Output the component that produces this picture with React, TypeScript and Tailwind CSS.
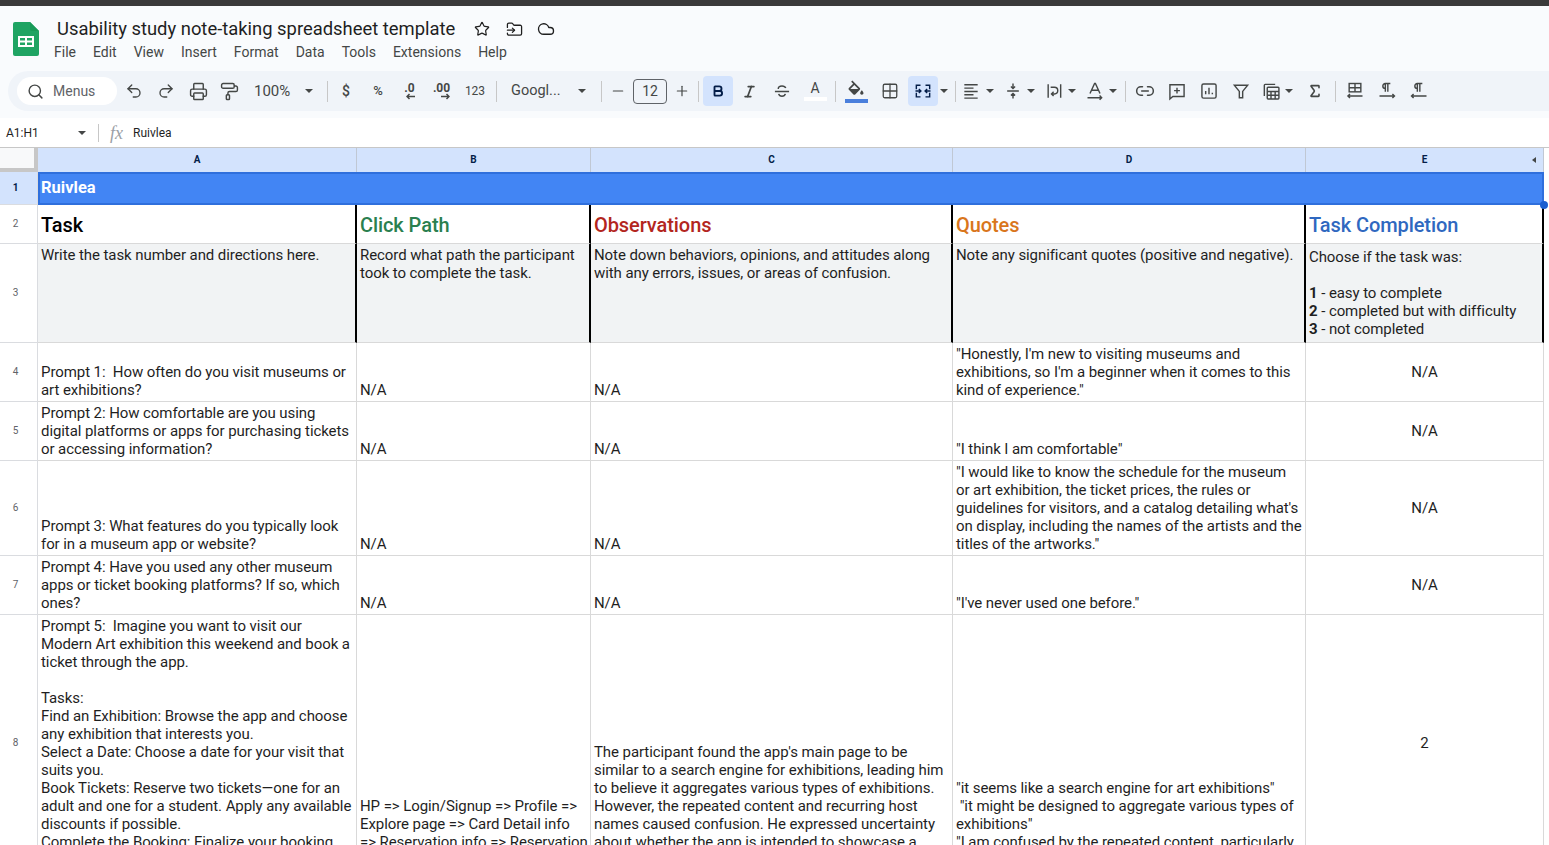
import {
	Bold,
	Cloud,
	FolderInput,
	Grid2x2,
	Italic,
	Link2,
	Minus,
	PaintRoller,
	Plus,
	Printer,
	Redo2,
	Search,
	Sigma,
	Star,
	Undo2,
} from "lucide-react";
import type { ReactNode } from "react";

const FONT = "font-['Roboto',sans-serif]";

function Caret({ className = "" }: { className?: string }) {
	return (
		<span
			className={`inline-block h-0 w-[8px] shrink-0 border-x-[4px] border-t-[4px] border-x-transparent border-t-[#444746] ${className}`}
		/>
	);
}

function Sep({ className = "" }: { className?: string }) {
	return <span className={`h-[21px] w-px shrink-0 bg-[#c7c7c7] ${className}`} />;
}

function Ico({ children, w = 32, className = "" }: { children: ReactNode; w?: number; className?: string }) {
	return (
		<span
			className={`flex h-[28px] shrink-0 items-center justify-center text-[#444746] ${className}`}
			style={{ width: w }}
		>
			{children}
		</span>
	);
}

function Svg({ children, size = 20 }: { children: ReactNode; size?: number }) {
	return (
		<svg
			fill="none"
			height={size}
			stroke="currentColor"
			strokeWidth="1.7"
			viewBox="0 0 24 24"
			width={size}
		>
			{children}
		</svg>
	);
}

function Arrow({ left }: { left?: boolean }) {
	return (
		<svg fill="none" height="7" stroke="currentColor" strokeWidth="1.5" viewBox="0 0 9 7" width="9">
			<path d={left ? "M9 3.500H1M3.500 1 1 3.500 3.500 6" : "M0 3.500h8M5.500 1 8 3.500 5.500 6"} />
		</svg>
	);
}

function Toolbar() {
	return (
		<div className="ml-[8px] flex h-[40px] items-center rounded-l-[20px] bg-[#f0f4f9] pl-[9px] text-[#444746]">
			<div className="flex h-[28px] w-[100px] shrink-0 items-center rounded-full bg-white pl-[10px]">
				<Search size={17} strokeWidth={2} />
				<span className="ml-[9px] text-[14px] text-[#5f6368]">Menus</span>
			</div>
			<Ico className="ml-px"><Undo2 size={18} strokeWidth={1.8} /></Ico>
			<Ico><Redo2 size={18} strokeWidth={1.8} /></Ico>
			<Ico><Printer size={19} strokeWidth={1.8} /></Ico>
			<Ico w={31}><PaintRoller size={19} strokeWidth={1.8} /></Ico>
			<span className="ml-[9px] w-[38px] text-[15px]">100%</span>
			<Caret className="ml-[13px]" />
			<Sep className="ml-[14px]" />
			<Ico className="ml-[2px]"><span className="text-[14px] font-medium">$</span></Ico>
			<Ico><span className="text-[13px] font-medium">%</span></Ico>
			<Ico w={31}>
				<span className="flex flex-col items-end text-[12px] font-bold leading-[10px]">
					.0
					<Arrow left />
				</span>
			</Ico>
			<Ico w={33}>
				<span className="flex flex-col items-end text-[12px] font-bold leading-[10px]">
					.00
					<Arrow />
				</span>
			</Ico>
			<Ico w={34}><span className="text-[12px]">123</span></Ico>
			<Sep className="ml-[4px]" />
			<span className="ml-[14px] w-[50px] text-[14.5px]">Googl...</span>
			<Caret className="ml-[17px]" />
			<Sep className="ml-[15px]" />
			<Ico className="ml-px" w={30}><Minus size={16} strokeWidth={1.8} /></Ico>
			<span className="flex h-[25px] w-[34px] shrink-0 items-center justify-center rounded-[4px] border border-[#5f6368] text-[14px]">
				12
			</span>
			<Ico w={30}><Plus size={16} strokeWidth={1.8} /></Ico>
			<Sep className="ml-px" />
			<span className="ml-[4px] flex h-[30px] w-[30px] shrink-0 items-center justify-center rounded-[4px] bg-[#d3e3fd] text-[#041e49]">
				<Bold size={14} strokeWidth={3.2} />
			</span>
			<Ico><Italic size={15} strokeWidth={2.8} /></Ico>
			<Ico w={33}>
				<Svg>
					<path d="M7.500 9.500C7.500 7 9.500 6 12 6s4 1 4.500 2.500M3.500 12.500h17M8 15.500c.5 2 2 2.800 4 2.800s3.500-.8 4-2.800" />
				</Svg>
			</Ico>
			<Ico w={34}>
				<span className="flex flex-col items-center text-[14px] leading-[15px]">
					A<span className="mt-px h-[4px] w-[23px] bg-white" />
				</span>
			</Ico>
			<Sep className="ml-[3px]" />
			<span className="flex w-[40px] shrink-0 flex-col items-center">
				<svg fill="#444746" height="17" viewBox="0 0 24 19" width="20">
					<path d="M16.560 8.940L7.620 0 6.210 1.410l2.380 2.380-5.150 5.150c-.59.59-.59 1.540 0 2.120l5.500 5.500c.29.29.68.44 1.060.44s.77-.15 1.060-.44l5.500-5.500c.59-.58.59-1.530 0-2.120zM5.210 10L10 5.210 14.790 10H5.210zM19 11.500s-2 2.170-2 3.500c0 1.100.9 2 2 2s2-.9 2-2c0-1.330-2-3.500-2-3.500z" />
				</svg>
				<span className="mt-[2px] h-[4px] w-[23px] bg-[#4a7fdc]" />
			</span>
			<Ico w={28}><Grid2x2 size={18} strokeWidth={1.7} /></Ico>
			<span className="ml-[4px] flex h-[30px] w-[30px] shrink-0 items-center justify-center rounded-[4px] bg-[#d3e3fd] text-[#041e49]">
				<Svg>
					<path d="M4 10V5h5M4 14v5h5M20 10V5h-5M20 14v5h-5M3 12h6M21 12h-6M7 9.500 9.500 12 7 14.500M17 9.500 14.500 12l2.500 2.500" />
				</Svg>
			</span>
			<Caret className="ml-[2px]" />
			<Sep className="ml-[7px]" />
			<Ico w={30}>
				<Svg><path d="M4 4.500h16M4 8.500h11M4 12.500h16M4 16.500h11M4 20.500h16" /></Svg>
			</Ico>
			<Caret />
			<Ico className="ml-[5px]" w={28}>
				<Svg><path d="M5 12h14M12 3v6M9.500 6.500 12 9l2.500-2.500M12 21v-6M9.500 17.500 12 15l2.500 2.500" /></Svg>
			</Ico>
			<Caret />
			<Ico className="ml-[4px]" w={29}>
				<Svg><path d="M5 4v16M20 4v16M8 7.500h4.500a4 4 0 0 1 0 8H9M11.500 13 9 15.500l2.500 2.500" /></Svg>
			</Ico>
			<Caret />
			<Ico className="ml-[4px]" w={29}>
				<Svg><path d="M6 15 11.500 3h1L18 15M8 11h8M3 20h17M17.500 17.500 20 20l-2.500 2.500" /></Svg>
			</Ico>
			<Caret />
			<Sep className="ml-[8px]" />
			<Ico w={38}><Link2 size={20} strokeWidth={1.8} /></Ico>
			<Ico w={26}>
				<Svg><path d="M3.500 4.500h17v14H7l-3.500 3zM12 8v7M8.500 11.500h7" /></Svg>
			</Ico>
			<Ico w={38}>
				<Svg><rect height="17" rx="2" width="17" x="3.500" y="3.500" /><path d="M8 16v-4M12 16V8M16 16v-2" /></Svg>
			</Ico>
			<Ico w={26}>
				<Svg><path d="M4 5h16l-6 7.500V20h-4v-7.500z" /></Svg>
			</Ico>
			<Ico className="ml-[2px]" w={29}>
				<Svg><path d="M4 18V5a1 1 0 0 1 1-1h12" /><rect height="14" rx="1" width="14" x="7.500" y="7.500" /><path d="M7.500 12.500h14M7.500 17h14M12 12.500v9M17 12.500v9" /></Svg>
			</Ico>
			<Caret />
			<Ico className="ml-[2px]" w={40}><Sigma size={16} strokeWidth={2.4} /></Ico>
			<Sep />
			<Ico w={38}>
				<Svg><rect height="10" width="14" x="5" y="3" /><path d="M5 8h14M12 3v10M3 18h18M6 15.500 3.500 18 6 20.500" /></Svg>
			</Ico>
			<Ico w={26}>
				<Svg><path d="M10 13V3h6M13 3v10M10 3a3 3 0 0 0 0 6M3 18h18M18.500 15.500 21 18l-2.500 2.500" /></Svg>
			</Ico>
			<Ico w={38}>
				<Svg><path d="M10 13V3h6M13 3v10M10 3a3 3 0 0 0 0 6M3 18h18M5.500 15.500 3 18l2.500 2.500" /></Svg>
			</Ico>
		</div>
	);
}

function Head({ label, end }: { label: string; end?: boolean }) {
	return (
		<div className="relative flex items-center justify-center border-r border-[#c0c8d4] bg-[#d3e3fd] text-[10px] font-bold text-[#041e49]">
			{label}
			{end && (
				<span className="absolute right-[7px] h-0 w-0 border-y-[3px] border-r-[4px] border-y-transparent border-r-[#444746]" />
			)}
		</div>
	);
}

function RowNo({ n, on }: { n: number; on?: boolean }) {
	return (
		<div
			className={`flex items-center justify-center border-b border-r border-[#dadce0] pr-[6px] text-[10px] ${
				on ? "bg-[#d3e3fd] font-bold text-[#041e49]" : "bg-white text-[#5f6368]"
			}`}
		>
			{n}
		</div>
	);
}

function Title({ children, color }: { children: ReactNode; color: string }) {
	return (
		<div
			className={`flex items-center border-b border-r-2 border-b-[#d9d9d9] border-r-black pl-[3px] pt-[2px] text-[20px] font-medium leading-[24px] ${color}`}
		>
			{children}
		</div>
	);
}

function Note({ children, top = "pt-[2px]" }: { children: ReactNode; top?: string }) {
	return (
		<div className={`whitespace-pre border-b border-r-2 border-b-[#d9d9d9] border-r-black bg-[#f1f3f4] px-[3px] ${top}`}>
			{children}
		</div>
	);
}

function Cell({ children, center }: { children?: ReactNode; center?: boolean }) {
	return (
		<div
			className={`flex overflow-hidden border-b border-r border-[#d9d9d9] px-[3px] ${
				center ? "items-center justify-center" : "items-end pb-[2px]"
			}`}
		>
			<div className="whitespace-pre">{children}</div>
		</div>
	);
}

const rows: { no: number; cells: string[]; done: string }[] = [
	{
		no: 4,
		cells: [
			"Prompt 1:  How often do you visit museums or\nart exhibitions?",
			"N/A",
			"N/A",
			"\"Honestly, I'm new to visiting museums and\nexhibitions, so I'm a beginner when it comes to this\nkind of experience.\"",
		],
		done: "N/A",
	},
	{
		no: 5,
		cells: [
			"Prompt 2: How comfortable are you using\ndigital platforms or apps for purchasing tickets\nor accessing information?",
			"N/A",
			"N/A",
			"\"I think I am comfortable\"",
		],
		done: "N/A",
	},
	{
		no: 6,
		cells: [
			"Prompt 3: What features do you typically look\nfor in a museum app or website?",
			"N/A",
			"N/A",
			"\"I would like to know the schedule for the museum\nor art exhibition, the ticket prices, the rules or\nguidelines for visitors, and a catalog detailing what's\non display, including the names of the artists and the\ntitles of the artworks.\"",
		],
		done: "N/A",
	},
	{
		no: 7,
		cells: [
			"Prompt 4: Have you used any other museum\napps or ticket booking platforms? If so, which\nones?",
			"N/A",
			"N/A",
			"\"I've never used one before.\"",
		],
		done: "N/A",
	},
	{
		no: 8,
		cells: [
			"Prompt 5:  Imagine you want to visit our\nModern Art exhibition this weekend and book a\nticket through the app.\n\nTasks:\nFind an Exhibition: Browse the app and choose\nany exhibition that interests you.\nSelect a Date: Choose a date for your visit that\nsuits you.\nBook Tickets: Reserve two tickets—one for an\nadult and one for a student. Apply any available\ndiscounts if possible.\nComplete the Booking: Finalize your booking\nand confirm.",
			"HP => Login/Signup => Profile =>\nExplore page => Card Detail info\n=> Reservation info => Reservation\nconfirmation",
			"The participant found the app's main page to be\nsimilar to a search engine for exhibitions, leading him\nto believe it aggregates various types of exhibitions.\nHowever, the repeated content and recurring host\nnames caused confusion. He expressed uncertainty\nabout whether the app is intended to showcase a\nsingle host.",
			"\"it seems like a search engine for art exhibitions\"\n \"it might be designed to aggregate various types of\nexhibitions\"\n\"I am confused by the repeated content, particularly\nthe hosts.\"",
		],
		done: "2",
	},
];

export default function App() {
	return (
		<div className={`h-[845px] w-[1549px] overflow-hidden bg-white text-black ${FONT}`}>
			<div className="h-[6px] bg-[#3a3a3a]" />
			<div className="h-[112px] bg-[#f9fbfd]">
				<div className="flex h-[65px]">
					<svg className="ml-[13px] mt-[16px] shrink-0" height="34" viewBox="0 0 26 34" width="26">
						<path d="M2 0h15l9 9v23a2 2 0 0 1-2 2H2a2 2 0 0 1-2-2V2a2 2 0 0 1 2-2z" fill="#1fa463" />
						<path d="M17 0l9 9h-7a2 2 0 0 1-2-2z" fill="#189a58" />
						<path d="M5 14h16v11H5zM7 16v2.500h5V16zM14 16v2.500h5V16zM7 20.500V23h5v-2.500zM14 20.500V23h5v-2.500z" fill="#fff" fillRule="evenodd" />
					</svg>
					<div className="ml-[15px] pt-[10px]">
						<div className="flex items-center text-[#1f1f1f]">
							<span className="ml-[3px] text-[18.4px] leading-[26px]">
								Usability study note-taking spreadsheet template
							</span>
							<Star className="ml-[19px]" size={16} strokeWidth={1.8} />
							<FolderInput className="ml-[16px]" size={17} strokeWidth={1.8} />
							<Cloud className="ml-[14px]" size={18} strokeWidth={1.8} />
						</div>
						<div className="flex gap-[17px] text-[14px] leading-[20px] text-[#444746]">
							<span>File</span>
							<span>Edit</span>
							<span>View</span>
							<span>Insert</span>
							<span>Format</span>
							<span>Data</span>
							<span>Tools</span>
							<span>Extensions</span>
							<span>Help</span>
						</div>
					</div>
				</div>
				<Toolbar />
			</div>
			<div className="flex h-[30px] items-center border-b border-[#c7c7c7] text-[12px] text-[#1f1f1f]">
				<span className="ml-[6px] w-[72px]">A1:H1</span>
				<Caret />
				<span className="ml-[12px] h-[18px] w-px bg-[#c7c7c7]" />
				<span className="ml-[11px] font-['Liberation_Serif',serif] text-[18px] italic leading-none text-[#9aa0a6]">fx</span>
				<span className="ml-[10px]">Ruivlea</span>
			</div>
			<div className="relative">
				<div className="grid grid-cols-[38px_319px_234px_362px_353px_238px] grid-rows-[24px_33px_39px_99px_59px_59px_95px_59px_257px] text-[15px] leading-[18px] tracking-[-0.08px] text-[#1f1f1f]">
					<div className="border-b-[4px] border-r-[4px] border-[#c7c7c7] bg-[#f8f9fa]" />
					<Head label="A" />
					<Head label="B" />
					<Head label="C" />
					<Head label="D" />
					<Head end label="E" />

					<RowNo n={1} on />
					<div className="col-span-5 flex items-center border-2 border-[#2f6fdc] bg-[#4285f4] pb-[2px] pl-[1px] text-[16.5px] font-bold tracking-normal text-white">
						Ruivlea
					</div>

					<RowNo n={2} />
					<Title color="text-black">Task</Title>
					<Title color="text-[#2a7f4f]">Click Path</Title>
					<Title color="text-[#b3261e]">Observations</Title>
					<Title color="text-[#d9761c]">Quotes</Title>
					<Title color="text-[#2f68c0]">Task Completion</Title>

					<RowNo n={3} />
					<Note>Write the task number and directions here.</Note>
					<Note>{"Record what path the participant\ntook to complete the task."}</Note>
					<Note>{"Note down behaviors, opinions, and attitudes along\nwith any errors, issues, or areas of confusion."}</Note>
					<Note>Note any significant quotes (positive and negative).</Note>
					<Note top="pt-[4px]">
						{"Choose if the task was:\n\n"}
						<b>1</b>
						{" - easy to complete\n"}
						<b>2</b>
						{" - completed but with difficulty\n"}
						<b>3</b>
						{" - not completed"}
					</Note>

					{rows.map((r) => (
						<div className="contents" key={r.no}>
							<RowNo n={r.no} />
							{r.cells.map((c, i) => (
								<Cell key={i}>{c}</Cell>
							))}
							<Cell center>{r.done}</Cell>
						</div>
					))}
				</div>
				<span className="absolute left-[1540px] top-[53px] h-[8px] w-[8px] rounded-full bg-[#1a5fd0]" />
			</div>
		</div>
	);
}
